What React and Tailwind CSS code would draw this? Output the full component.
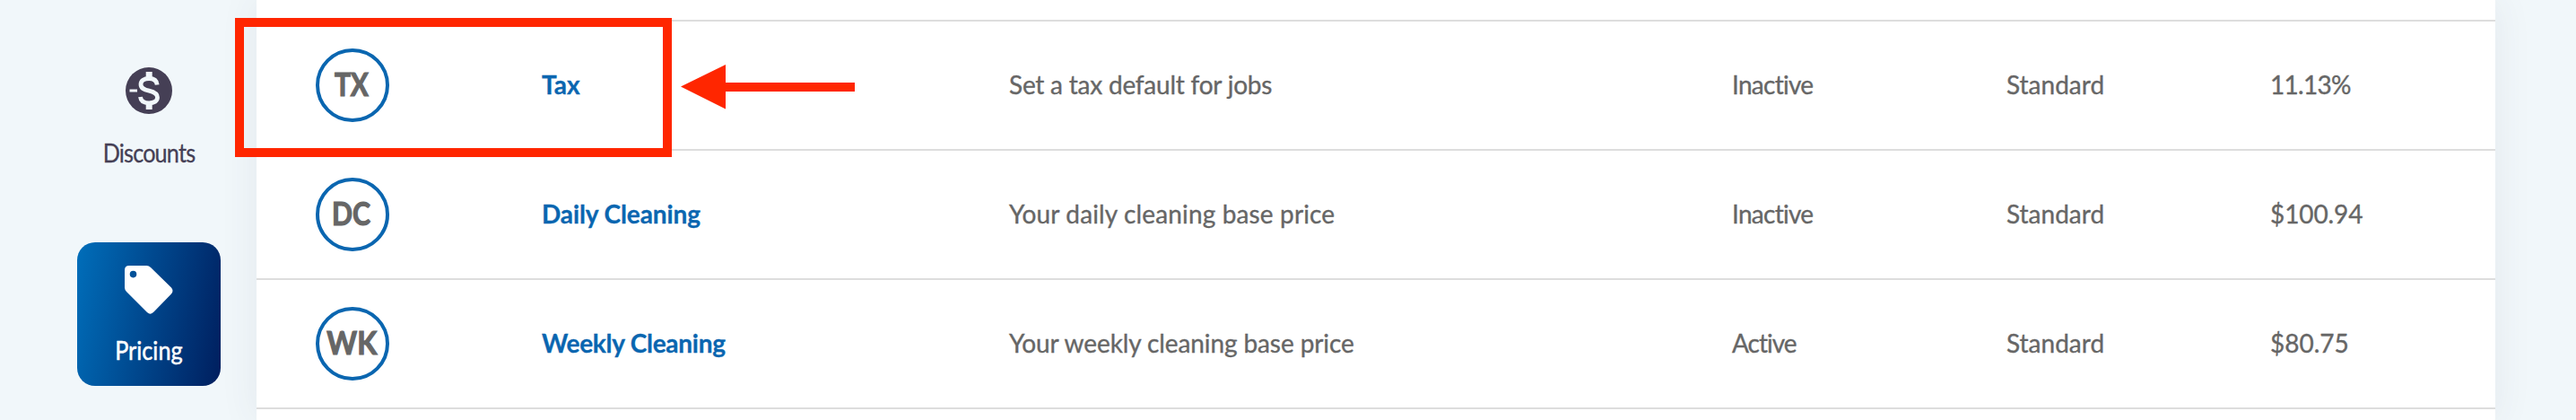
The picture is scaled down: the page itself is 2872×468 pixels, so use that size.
const rows = [
  {
    code: "TX", codeClass: "scale-x-[0.83]",
    name: "Tax", nameClass: "",
    description: "Set a tax default for jobs", descriptionClass: "tracking-[-0.22px]",
    status: "Inactive", statusClass: "tracking-[-0.72px]",
    price: "11.13%", priceClass: "tracking-[-0.7px]",
  },
  {
    code: "DC", codeClass: "scale-x-[0.84]",
    name: "Daily Cleaning", nameClass: "tracking-[-0.1px]",
    description: "Your daily cleaning base price", descriptionClass: "tracking-[0.14px]",
    status: "Inactive", statusClass: "tracking-[-0.72px]",
    price: "$100.94", priceClass: "tracking-[-0.1px]",
  },
  {
    code: "WK", codeClass: "scale-x-[0.895]",
    name: "Weekly Cleaning", nameClass: "tracking-[-0.25px]",
    description: "Your weekly cleaning base price", descriptionClass: "tracking-[-0.1px]",
    status: "Active", statusClass: "tracking-[-1px]",
    price: "$80.75", priceClass: "",
  },
];

function DiscountIcon() {
  return (
    <svg className="h-[52px] w-[52px]" viewBox="0 0 52 52" fill="none">
      <circle cx="26" cy="26" r="26" fill="#453f55" />
      <path d="M4.5 26H13" stroke="#f1f7fa" strokeWidth="3" />
      <path d="M26.2 5v8M26.2 39v8" stroke="#f1f7fa" strokeWidth="7" />
      <path
        d="M35.2 19.500C34.700 14.500 31.500 12.500 26.200 12.500C20.500 12.500 17 15 17 18.900C17 23.300 20.500 24.800 26.200 26.200C32 27.600 35.500 29.200 35.500 33.600C35.500 37.500 32 39.800 26.200 39.800C20.300 39.800 17 37.400 16.500 33"
        stroke="#f1f7fa"
        strokeWidth="4.8"
      />
    </svg>
  );
}

function TagIcon() {
  return (
    <svg className="h-[54px] w-[54px]" viewBox="0 0 54 54">
      <path
        fill="#fff"
        fillRule="evenodd"
        d="M5 0H24.500Q27 0 29 2L52 24.500Q55 28 52 31.500L32.500 51.500Q29 55.500 25 52L2 29Q0 27 0 24.500V5Q0 0 5 0ZM9.500 5.800a3.800 3.800 0 1 0 0 7.600a3.800 3.800 0 1 0 0-7.600Z"
      />
    </svg>
  );
}

function Row({ row }) {
  return (
    <div className="flex h-36 items-center border-b-2 border-[#dddddd] text-[28px] leading-[34px] text-[#666666] [-webkit-text-stroke:0.35px_#666666]">
      <div className="w-[318px] shrink-0 pl-[66px]">
        <div className="flex h-[82px] w-[82px] items-center justify-center rounded-full border-4 border-[#0a66b0] pr-[2px] pb-[5px]">
          <span className={"text-[36px] leading-[44px] font-bold [-webkit-text-stroke:1.2px_#666666] " + row.codeClass}>{row.code}</span>
        </div>
      </div>
      <div className={"w-[521px] shrink-0 pb-[3px] font-bold text-[#0a66b0] [-webkit-text-stroke:0.3px_#0a66b0] " + row.nameClass}>{row.name}</div>
      <div className={"w-[806px] shrink-0 pb-[3px] " + row.descriptionClass}>{row.description}</div>
      <div className={"w-[306px] shrink-0 pb-[3px] " + row.statusClass}>{row.status}</div>
      <div className="w-[294px] shrink-0 pb-[3px]">Standard</div>
      <div className={"pb-[3px] " + row.priceClass}>{row.price}</div>
    </div>
  );
}

export default function App() {
  return (
    <div className="relative flex h-[468px] w-[2872px] overflow-hidden bg-[#f1f7fa] font-['Lato',sans-serif]">
      <nav className="flex w-[286px] shrink-0 flex-col pt-[75px] pl-[86px] text-[28px] leading-[34px]">
        <div className="flex h-[195px] w-[159px] flex-col items-center text-[#453f55]">
          <DiscountIcon />
          <span className="mt-[26px] scale-x-90 tracking-[-0.9px] [-webkit-text-stroke:0.3px_#453f55]">Discounts</span>
        </div>
        <div className="flex h-40 w-40 flex-col items-center rounded-[20px] bg-[linear-gradient(100deg,#006eba_0%,#002060_98%)] pt-[26px] text-white">
          <TagIcon />
          <span className="mt-[23px] scale-x-90 [-webkit-text-stroke:0.5px_#ffffff]">Pricing</span>
        </div>
      </nav>
      <main className="h-[468px] w-[2496px] shrink-0 bg-white shadow-[0_0_40px_rgba(69,63,85,0.08)]">
        <div className="h-6 border-b-2 border-[#dddddd]" />
        {rows.map((row) => (
          <Row key={row.code} row={row} />
        ))}
      </main>
      <div className="absolute top-[19.5px] left-[262px] h-[155.5px] w-[487px] border-[10px] border-[#ff2600]" />
      <svg className="absolute top-[72px] left-[759px] h-[50px] w-[194px]" viewBox="0 0 194 50">
        <path fill="#ff2600" d="M0 24.500L50 0V20H194V30H50V49.500Z" />
      </svg>
    </div>
  );
}
